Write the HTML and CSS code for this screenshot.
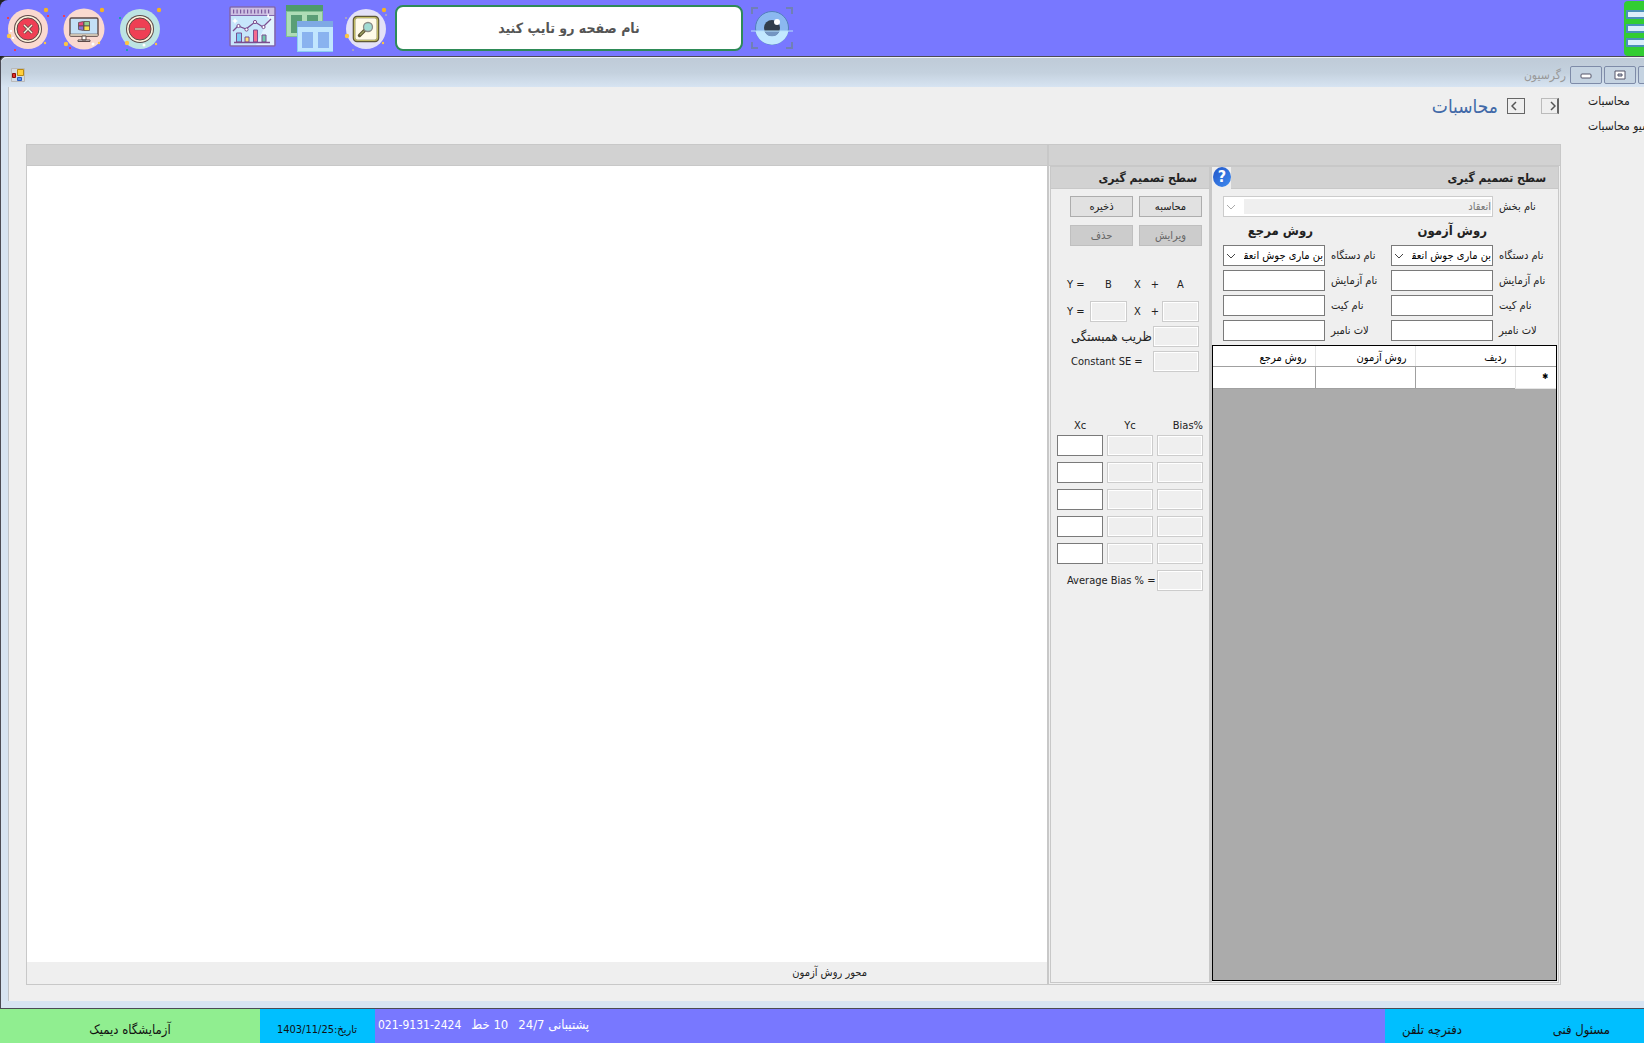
FILE: index.html
```html
<!DOCTYPE html>
<html lang="fa">
<head>
    <meta charset="UTF-8">
    <meta name="viewport" content="width=device-width, initial-scale=1.0">
    <title>رگرسیون</title>
    <link rel="stylesheet" href="styles.css">
</head>
<body>
    <header class="topbar">
        <div class="tools">
            <button type="button" class="tool" aria-label="خروج">
                <svg width="48" height="48" viewBox="0 0 48 48">
                    <circle cx="24" cy="25" r="20" fill="#fad9d0"/>
                    <circle cx="24" cy="25" r="14" fill="#5d4a48"/>
                    <circle cx="24" cy="25" r="13" fill="#fdf3dc"/>
                    <circle cx="24" cy="25" r="11" fill="#ef3f54" stroke="#5d4a48"/>
                    <path d="M20 21l8 8M28 21l-8 8" stroke="#5d4a48" stroke-width="3"/>
                    <path d="M20 21l8 8M28 21l-8 8" stroke="#fdf3dc" stroke-width="1.4"/>
                    <circle cx="42" cy="6" r="2.2" fill="#f5b324"/>
                    <circle cx="5" cy="32" r="2.2" fill="#fcc544"/>
                    <circle cx="41" cy="39" r="1.2" fill="#fcc544"/>
                    <path d="M3 13h2v2h-2zM43 11h2v2h-2zM10 45h2v2h-2z" fill="#ef3f54"/>
                    <path d="M6 26h2v2h-2zM8 33h2v2h-2z" fill="#fff"/>
                </svg>
            </button>
            <button type="button" class="tool" aria-label="دسکتاپ">
                <svg width="48" height="48" viewBox="0 0 48 48">
                    <circle cx="24" cy="25" r="20.5" fill="#fad9d0"/>
                    <rect x="10" y="14" width="28" height="18" rx="1.5" fill="#c4e0f6" stroke="#5d4a48" stroke-width="1.4"/>
                    <path d="M10 30h28v2h-28z" fill="#fff5df" stroke="#5d4a48" stroke-width=".6"/>
                    <path d="M22 32h4v4h-4zM18 36h12v1.5h-12z" fill="#fff" stroke="#5d4a48"/>
                    <path d="M18.5 18.5l5-1v4.5h-5z" fill="#ea4a80" stroke="#5d4a48" stroke-width=".8"/>
                    <path d="M24 17.5h5.5v4.5h-5.5z" fill="#90cf8f" stroke="#5d4a48" stroke-width=".8"/>
                    <path d="M18.5 22h5v4.5l-5-1z" fill="#8874d8" stroke="#5d4a48" stroke-width=".8"/>
                    <path d="M24 22h5.5v4.5h-5.5z" fill="#f9e24f" stroke="#5d4a48" stroke-width=".8"/>
                    <circle cx="42" cy="6" r="2.2" fill="#f5b324"/>
                    <circle cx="6" cy="40" r="2.2" fill="#fcc544"/>
                    <circle cx="39" cy="39" r="1.2" fill="#fcc544"/>
                    <circle cx="33" cy="40" r="1.5" fill="#fff"/>
                    <path d="M3 11h2v2h-2zM9 43h2v2h-2z" fill="#ef3f54"/>
                </svg>
            </button>
            <button type="button" class="tool" aria-label="کوچک کردن">
                <svg width="48" height="48" viewBox="0 0 48 48">
                    <circle cx="24" cy="25" r="20" fill="#bde4e2"/>
                    <circle cx="24" cy="25" r="14" fill="#5d4a48"/>
                    <circle cx="24" cy="25" r="13" fill="#fdf3dc"/>
                    <circle cx="24" cy="25" r="11" fill="#ef3f54" stroke="#5d4a48"/>
                    <path d="M18.5 25h11" stroke="#8b5a55" stroke-width="2.5"/>
                    <path d="M19 25h10" stroke="#d6c6b0" stroke-width="1.4"/>
                    <circle cx="43" cy="6" r="2.2" fill="#f5b324"/>
                    <circle cx="11" cy="39" r="2.2" fill="#fcc544"/>
                    <circle cx="40" cy="40" r="1.2" fill="#fcc544"/>
                    <circle cx="28" cy="41" r="1.5" fill="#fff"/>
                    <path d="M3 13h2v2h-2zM10 45h2v2h-2z" fill="#1d9fb0"/>
                </svg>
            </button>
        </div>
        <div class="pages">
            <button type="button" class="tool" aria-label="نمودار">
                <svg width="48" height="48" viewBox="0 0 48 48">
                    <rect x="2" y="3" width="45" height="39" rx="1" fill="#c7e6fb" stroke="#8467ad" stroke-width="1.6"/>
                    <path d="M28 41l14-29h4v29z" fill="#e2f3fe"/>
                    <path d="M3 4h43v7h-43z" fill="#cdbfe2"/>
                    <path d="M2 11.5h45" stroke="#8467ad"/>
                    <path d="M5 7.5h38" stroke="#7b5ba0" stroke-width="4" stroke-dasharray="1.2 2.3"/>
                    <path d="M8.5 29h5v9h-5z" fill="#7ecbf4" stroke="#7b4e90"/>
                    <path d="M17 33h4v5h-4z" fill="#ffe17a" stroke="#7b4e90"/>
                    <path d="M25.5 26h4v12h-4z" fill="#f46a8e" stroke="#7b4e90"/>
                    <path d="M34 31h4v7h-4z" fill="#70c9ae" stroke="#7b4e90"/>
                    <path d="M6 38.5h36" stroke="#7b4e90" stroke-width="1.3"/>
                    <path d="M5 27l5-5 8 3 9-7 8 5 8-8" fill="none" stroke="#7b4e90" stroke-width="1.3"/>
                    <g fill="#fff" stroke="#7b4e90"><circle cx="10.5" cy="22" r="1.6"/><circle cx="18.5" cy="25.5" r="1.6"/><circle cx="27" cy="18" r="1.6"/><circle cx="35.5" cy="23" r="1.6"/></g>
                    <path d="M7 14l1 2 2 1-2 1-1 2-1-2-2-1 2-1zM40 9l2 5-3-1z" fill="#fff"/>
                </svg>
            </button>
            <button type="button" class="tool" aria-label="پنجره ها">
                <svg width="48" height="50" viewBox="0 0 48 50">
                    <path d="M1 2h37v32h-37z" fill="#82bf93"/>
                    <path d="M1 2h37v6h-37z" fill="#4e9a6d"/>
                    <path d="M2 9h35v24h-35z" fill="#aedcb6"/>
                    <path d="M6 12h11v18h-11zM22 12h11v10h-11z" fill="#5a9e76"/>
                    <path d="M12 18h36v31h-36z" fill="#8ccdf2"/>
                    <path d="M13 24h35v24h-35z" fill="#c1e6fe"/>
                    <path d="M12 18h36v6h-36z" fill="#7ea9e4"/>
                    <path d="M17 29h11v16h-11zM33 29h11v16h-11z" fill="#8ab3ef"/>
                </svg>
            </button>
            <button type="button" class="tool" aria-label="جستجو">
                <svg width="48" height="48" viewBox="0 0 48 48">
                    <circle cx="24" cy="25" r="20" fill="#e3e1f7"/>
                    <rect x="12" y="13" width="24" height="24" rx="3" fill="#fffbe9" stroke="#5e5836" stroke-width="2.6"/>
                    <rect x="12.5" y="13.5" width="23" height="23" rx="3" fill="none" stroke="#c3bd67" stroke-width="1.2"/>
                    <path d="M23 26l-5.5 5.5" stroke="#5e5836" stroke-width="3.4" stroke-linecap="round"/>
                    <path d="M22 27l-4 4" stroke="#9ba363" stroke-width="1.2"/>
                    <circle cx="26" cy="23" r="4.5" fill="#a1dbd3" stroke="#8b8b87" stroke-width="1.3"/>
                    <circle cx="42" cy="6" r="2.2" fill="#f5b324"/>
                    <circle cx="5" cy="32" r="2.2" fill="#fcc544"/>
                    <circle cx="41" cy="39" r="1.2" fill="#fcc544"/>
                    <path d="M3 13h2v2h-2zM43 10h2v2h-2zM10 45h2v2h-2z" fill="#a7a1c5"/>
                </svg>
            </button>
        </div>
        <input type="text" class="page-search" dir="rtl" placeholder="نام صفحه رو تایپ کنید" aria-label="نام صفحه">
        <button type="button" class="tool eye" aria-label="نمایش">
            <svg width="44" height="44" viewBox="0 0 44 44">
                <path d="M2 8v-6h6M36 2h6v6M2 36v6h6M36 42h6v-6" fill="none" stroke="#7080b5" stroke-width="2"/>
                <circle cx="22" cy="22" r="16.5" fill="#8bb8f0" stroke="#527fbb"/>
                <path d="M5.5 25a16.8 16.8 0 0 0 33 0z" fill="#c2e8ff"/>
                <circle cx="22" cy="22" r="8" fill="#323e4d"/>
                <path d="M14.5 25a8 8 0 0 0 15 0z" fill="#7395c1"/>
                <circle cx="27" cy="16" r="3" fill="#fff"/>
                <path d="M1 25h42" stroke="#b7e1fb"/>
            </svg>
        </button>
        <button type="button" class="menu-button" aria-label="منو">
            <span></span><span></span><span></span>
        </button>
    </header>

    <main class="window">
        <div class="titlebar">
            <svg class="app-icon" width="14" height="14" viewBox="0 0 14 14">
                <path d="M.5.5h13v13h-13z" fill="#d4dbe2" stroke="#b9b9b9"/>
                <path d="M6.5 1.5h6v6h-6z" fill="#ffcf3d" stroke="#b88911"/>
                <path d="M1.5 5.5h3v4h-3z" fill="#e0302a" stroke="#8a0e0c"/>
                <path d="M6.5 9.5h4v3h-4z" fill="#5a93f0" stroke="#2b5bc0"/>
            </svg>
            <span class="title">رگرسیون</span>
            <div class="window-buttons">
                <button type="button" aria-label="کمینه">
                    <svg width="12" height="8" viewBox="0 0 12 8"><rect x="1" y="3" width="10" height="4" rx="1" fill="#fff" stroke="#555568"/></svg>
                </button>
                <button type="button" aria-label="بازگردانی">
                    <svg width="12" height="10" viewBox="0 0 12 10"><path d="M1 1h10v8h-10z" fill="#fff" stroke="#555568"/><path d="M4 4h4v2h-4z" fill="#b9c9da" stroke="#555568"/></svg>
                </button>
                <button type="button" aria-label="بستن"></button>
            </div>
        </div>

        <div class="client">
            <div class="content">
                <div class="page-head">
                    <h1>محاسبات</h1>
                    <button type="button" class="step" aria-label="بعدی"><svg width="6" height="10" viewBox="0 0 6 10"><path d="M5 1l-4 4 4 4" fill="none" stroke="#555" stroke-width="1.5"/></svg></button>
                    <button type="button" class="step step-end" aria-label="قبلی"><svg width="6" height="10" viewBox="0 0 6 10"><path d="M1 1l4 4-4 4" fill="none" stroke="#555" stroke-width="1.5"/></svg></button>
                </div>

                <div class="workspace">
                    <section class="plot">
                        <div class="strip"></div>
                        <div class="canvas"></div>
                        <div class="axis">محور روش آزمون</div>
                    </section>

                    <div class="side">
                        <div class="strip"></div>
                        <div class="panels">
                            <section class="panel decision">
                                <h2>سطح تصمیم گیری</h2>
                                <div class="actions">
                                    <button type="button">ذخیره</button>
                                    <button type="button">محاسبه</button>
                                    <button type="button" disabled>حذف</button>
                                    <button type="button" disabled>ویرایش</button>
                                </div>
                                <div class="equation">
                                    <span>Y =</span><span class="mid">B</span><span class="mid">X</span><span class="mid">+</span><span class="mid">A</span>
                                    <label for="slope">Y =</label><input type="text" id="slope" disabled><span class="mid">X</span><label class="mid" for="intercept">+</label><input type="text" id="intercept" disabled>
                                </div>
                                <div class="results">
                                    <label class="correlation" for="correlation">ظریب همبستگی</label><input type="text" id="correlation" disabled>
                                    <label for="constantSe">Constant SE =</label><input type="text" id="constantSe" disabled>
                                </div>
                                <div class="bias-head">
                                    <span>Xc</span><span>Yc</span><span>Bias%</span>
                                </div>
                                <div class="bias">
                                    <input type="text" aria-label="Xc 1"><input type="text" aria-label="Yc 1" disabled><input type="text" aria-label="Bias 1" disabled>
                                    <input type="text" aria-label="Xc 2"><input type="text" aria-label="Yc 2" disabled><input type="text" aria-label="Bias 2" disabled>
                                    <input type="text" aria-label="Xc 3"><input type="text" aria-label="Yc 3" disabled><input type="text" aria-label="Bias 3" disabled>
                                    <input type="text" aria-label="Xc 4"><input type="text" aria-label="Yc 4" disabled><input type="text" aria-label="Bias 4" disabled>
                                    <input type="text" aria-label="Xc 5"><input type="text" aria-label="Yc 5" disabled><input type="text" aria-label="Bias 5" disabled>
                                    <label for="average">Average Bias % =</label><input type="text" id="average" disabled>
                                </div>
                            </section>

                            <section class="panel methods" dir="rtl">
                                <div class="panel-head">
                                    <h2>سطح تصمیم گیری</h2>
                                    <button type="button" class="help" aria-label="راهنما">?</button>
                                </div>
                                <form class="form">
                                    <label for="section">نام بخش</label>
                                    <div class="combo wide">
                                        <select id="section" disabled><option>انعقاد</option></select>
                                        <svg width="10" height="6" viewBox="0 0 10 6"><path d="M1 1l4 4 4-4" fill="none" stroke="#aaa"/></svg>
                                    </div>
                                    <h3 class="test-head">روش آزمون</h3>
                                    <h3 class="ref-head">روش مرجع</h3>
                                    <label for="device1">نام دستگاه</label>
                                    <div class="combo">
                                        <select id="device1"><option>بن ماری جوش انعقاد</option></select>
                                        <svg width="10" height="6" viewBox="0 0 10 6"><path d="M1 1l4 4 4-4" fill="none" stroke="#444"/></svg>
                                    </div>
                                    <label for="device2">نام دستگاه</label>
                                    <div class="combo">
                                        <select id="device2"><option>بن ماری جوش انعقاد</option></select>
                                        <svg width="10" height="6" viewBox="0 0 10 6"><path d="M1 1l4 4 4-4" fill="none" stroke="#444"/></svg>
                                    </div>
                                    <label for="test1">نام آزمایش</label><input type="text" id="test1">
                                    <label for="test2">نام آزمایش</label><input type="text" id="test2">
                                    <label for="kit1">نام کیت</label><input type="text" id="kit1">
                                    <label for="kit2">نام کیت</label><input type="text" id="kit2">
                                    <label for="lot1">لات نامبر</label><input type="text" id="lot1">
                                    <label for="lot2">لات نامبر</label><input type="text" id="lot2">
                                </form>
                                <div class="data-grid">
                                    <table>
                                        <colgroup><col class="col-mark"><col class="col-data"><col class="col-data"><col></colgroup>
                                        <thead>
                                            <tr><th></th><th>ردیف</th><th>روش آزمون</th><th>روش مرجع</th></tr>
                                        </thead>
                                        <tbody>
                                            <tr><td class="mark">✱</td><td></td><td></td><td></td></tr>
                                        </tbody>
                                    </table>
                                </div>
                            </section>
                        </div>
                    </div>
                </div>
            </div>

            <nav class="side-menu">
                <a href="#">محاسبات</a>
                <a href="#">آرشیو محاسبات</a>
            </nav>
        </div>
    </main>

    <footer class="statusbar">
        <div class="lab">آزمایشگاه دیمیک</div>
        <div class="date" dir="rtl">تاریخ:1403/11/25</div>
        <div class="support"><span class="phone">021-9131-2424</span><span dir="rtl">10 خط</span><span dir="rtl">پشتیبانی 24/7</span></div>
        <div class="links">
            <a href="#">دفترچه تلفن</a>
            <a href="#">مسئول فنی</a>
        </div>
    </footer>
</body>
</html>
```

FILE: styles.css
```css
* {
    box-sizing: border-box;
}
body {
    margin: 0;
    height: 100vh;
    display: flex;
    flex-direction: column;
    overflow: hidden;
    background-color: #222;
    color: #222;
    font-family: "DejaVu Sans Condensed", "DejaVu Sans", sans-serif;
    font-size: 11px;
    line-height: 12px;
}
button, input, select {
    font: inherit;
    color: inherit;
    margin: 0;
    padding: 0;
    border-radius: 0;
}
a {
    color: inherit;
    text-decoration: none;
}
svg {
    display: block;
    flex: none;
}

/* نوار بالا */
.topbar {
    height: 56px;
    flex: none;
    display: flex;
    align-items: center;
    padding-left: 4px;
    background-color: #7878ff;
    border-top-left-radius: 8px;
}
.tools, .pages {
    display: flex;
    align-items: center;
    gap: 8px;
}
.tool {
    border: none;
    background: none;
}
.pages {
    margin-left: 64px;
    gap: 9px;
}
.page-search {
    width: 348px;
    height: 46px;
    margin-left: 5px;
    border: 2px solid #2e8b57;
    border-radius: 8px;
    background-color: #fff;
    text-align: center;
    font-size: 14px;
    font-weight: bold;
}
.page-search::placeholder {
    color: #555;
    opacity: 1;
}
.eye {
    margin-left: 7px;
}
.menu-button {
    width: 20px;
    height: 55px;
    margin-left: auto;
    display: flex;
    flex-direction: column;
    justify-content: center;
    align-items: flex-end;
    gap: 5px;
    border: none;
    border-radius: 4px 0 0 4px;
    background-color: #32cd32;
}
.menu-button span {
    width: 18px;
    height: 9px;
    border: 2px solid #4a90b8;
    border-right: none;
    background-color: #dceefb;
}

/* پنجره */
.window {
    flex: 1;
    min-height: 0;
    display: flex;
    flex-direction: column;
    border: 1px solid #4b4b55;
    border-right: none;
    border-top-left-radius: 6px;
    padding: 0 0 7px 7px;
    background-color: #d7e4f2;
}
.titlebar {
    height: 30px;
    flex: none;
    display: flex;
    align-items: center;
    margin-left: -7px;
    padding: 4px 0 0 10px;
    border-top: 1px solid #eef2f6;
    border-top-left-radius: 6px;
    background: linear-gradient(#bfcbd8, #c4d1de 50%, #d7e4f2);
}
.title {
    margin-left: auto;
    color: #999;
    font-size: 12px;
    line-height: 16px;
}
.window-buttons {
    width: 74px;
    margin-left: 4px;
    display: flex;
    gap: 2px;
    overflow: hidden;
}
.window-buttons button {
    width: 32px;
    height: 18px;
    flex: none;
    display: flex;
    align-items: center;
    justify-content: center;
    border: 1px solid #7e8ba8;
    border-radius: 2px;
    background-color: #c5d3e1;
}
.client {
    flex: 1;
    min-height: 0;
    display: flex;
    border-left: 1px solid #bfc3c8;
    background-color: #efefef;
}
.content {
    flex: 1;
    min-width: 0;
    display: flex;
    flex-direction: column;
    padding: 0 0 16px 17px;
}
.side-menu {
    width: 56px;
    flex: none;
    margin-left: 27px;
    padding-top: 6px;
    display: flex;
    flex-direction: column;
    gap: 9px;
    overflow: hidden;
    white-space: nowrap;
    font-size: 12px;
    line-height: 16px;
}
.page-head {
    height: 57px;
    flex: none;
    display: flex;
    justify-content: flex-end;
    align-items: flex-start;
    padding: 11px 2px 0 0;
}
.page-head h1 {
    margin: 0 9px 0 0;
    color: #4169a8;
    font-size: 19px;
    line-height: 16px;
    font-weight: normal;
}
.step {
    width: 18px;
    height: 16px;
    display: flex;
    align-items: center;
    padding-left: 3px;
    border: 1px solid #666;
    background-color: #efefef;
}
.step-end {
    margin-left: 16px;
    padding-left: 8px;
    border-color: #bbb;
    border-right: 2px solid #666;
}

/* ناحیه کار */
.workspace {
    flex: 1;
    min-height: 0;
    display: flex;
    border: 1px solid #c8c8c8;
}
.plot {
    flex: 1;
    display: flex;
    flex-direction: column;
    border-right: 2px solid #c8c8c8;
}
.strip {
    height: 21px;
    flex: none;
    background-color: #d2d2d2;
    border-bottom: 1px solid #c8c8c8;
}
.canvas {
    flex: 1;
    background-color: #fff;
}
.axis {
    height: 22px;
    padding-right: 180px;
    text-align: right;
    line-height: 22px;
}
.side {
    width: 511px;
    display: flex;
    flex-direction: column;
}
.panels {
    flex: 1;
    min-height: 0;
    display: flex;
    padding: 0 1px 1px;
}
.panel {
    display: flex;
    flex-direction: column;
    border: 1px solid #c8c8c8;
}
.panel h2 {
    height: 22px;
    margin: 0;
    padding-right: 12px;
    border-bottom: 1px solid #c8c8c8;
    background-color: #d2d2d2;
    text-align: right;
    font-size: 12px;
    line-height: 22px;
}
.decision {
    width: 160px;
}
.methods {
    flex: 1;
    border-left-width: 2px;
}
.panel input {
    width: 100%;
    height: 21px;
    min-width: 0;
    border: 1px solid #7a7a7a;
    background-color: #fff;
}
.panel input:disabled {
    border-color: #ccc;
    background-color: #efefef;
    box-shadow: inset 0 0 0 1px #fff;
}

/* محاسبات رگرسیون */
.actions {
    display: grid;
    grid-template-columns: 63px 63px;
    gap: 8px 6px;
    padding: 7px 0 0 19px;
}
.actions button {
    height: 21px;
    border: 1px solid #adadad;
    background-color: #e1e1e1;
}
.actions button:disabled {
    border-color: #bfbfbf;
    background-color: #ccc;
    color: #666;
}
.equation {
    display: grid;
    grid-template-columns: 23px 37px 21px 14px 37px;
    grid-template-rows: 20px 21px;
    row-gap: 6px;
    align-items: center;
    margin: 29px 0 0 16px;
}
.mid {
    text-align: center;
}
.results {
    display: grid;
    grid-template-columns: 82px 46px;
    gap: 4px 0;
    align-items: center;
    margin: 4px 0 0 20px;
    white-space: nowrap;
}
.correlation {
    font-size: 13px;
}
.bias-head {
    display: grid;
    grid-template-columns: 46px 46px 46px;
    column-gap: 4px;
    margin: 48px 0 0 6px;
    text-align: center;
}
.bias-head span:last-child {
    text-align: right;
}
.bias {
    display: grid;
    grid-template-columns: 46px 46px 46px;
    gap: 6px 4px;
    align-items: center;
    margin: 3px 0 0 6px;
}
.bias label {
    grid-column: span 2;
    padding-left: 10px;
    white-space: nowrap;
}

/* روش ها */
.panel-head {
    display: flex;
}
.panel-head h2 {
    flex: 1;
}
.help {
    width: 18px;
    height: 20px;
    margin-left: 1px;
    border: none;
    border-radius: 50%;
    background: linear-gradient(135deg, #2456c8, #3f8cf0);
    color: #fff;
    font-size: 16px;
    font-weight: bold;
    line-height: 20px;
}
.form {
    display: grid;
    grid-template-columns: 54px 102px 54px 102px;
    gap: 4px 6px;
    align-items: center;
    padding: 7px 5px 4px 10px;
    white-space: nowrap;
}
.form label {
    text-align: left;
}
.form h3 {
    margin: 0;
    padding-right: 6px;
    font-size: 13px;
    line-height: 20px;
}
.form .test-head {
    grid-column: 2;
}
.form .ref-head {
    grid-column: 4;
    padding-right: 12px;
}
.combo {
    position: relative;
    height: 21px;
}
.wide {
    grid-column: span 3;
}
.combo select {
    width: 100%;
    height: 21px;
    appearance: none;
    padding: 2px 1px 2px 20px;
    border: 1px solid #7a7a7a;
    background-color: #fff;
    color: #000;
}
.combo select:disabled {
    border-color: #ccc;
    background: linear-gradient(#efefef, #efefef) content-box, #fff;
    color: #777;
    opacity: 1;
}
.combo svg {
    position: absolute;
    left: 3px;
    top: 8px;
    pointer-events: none;
}
.data-grid {
    flex: 1;
    margin: 0 1px 1px 0;
    border: 1px solid #000;
    background-color: #ababab;
}
.data-grid table {
    width: 100%;
    table-layout: fixed;
    border-collapse: collapse;
    background-color: #fff;
    color: #000;
}
.col-mark {
    width: 41px;
}
.col-data {
    width: 100px;
}
.data-grid th {
    height: 20px;
    padding: 4px 8px 0;
    border-left: 1px solid #e5e5e5;
    border-bottom: 1px solid #a0a0a0;
    text-align: right;
    font-weight: normal;
}
.data-grid td {
    height: 22px;
    padding: 0 8px;
    border-left: 1px solid #a0a0a0;
    border-bottom: 1px solid #a0a0a0;
}
.data-grid .mark {
    border-color: #e5e5e5;
    font-size: 8px;
}
.data-grid th:last-child, .data-grid td:last-child {
    border-left: none;
}

/* نوار وضعیت */
.statusbar {
    height: 34px;
    flex: none;
    display: flex;
    background-color: #7878ff;
    color: #111;
    line-height: 42px;
    overflow: hidden;
}
.lab {
    width: 260px;
    background-color: #90ee90;
    text-align: center;
    font-size: 13px;
}
.date {
    width: 115px;
    padding-right: 18px;
    background-color: #00bfff;
}
.support {
    flex: 1;
    display: flex;
    gap: 10px;
    padding-left: 3px;
    color: #fff;
    font-size: 13px;
    line-height: 32px;
}
.phone {
    font-size: 12px;
}
.links {
    width: 259px;
    display: flex;
    justify-content: space-between;
    padding: 0 34px 0 17px;
    background-color: #00bfff;
    font-size: 13px;
}
```
